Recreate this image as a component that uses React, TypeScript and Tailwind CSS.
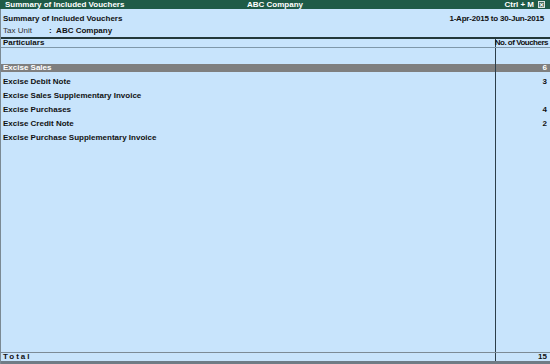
import React from "react";

const rows: { name: string; count?: string; active?: boolean }[] = [
  { name: "Excise Sales", count: "6", active: true },
  { name: "Excise Debit Note", count: "3" },
  { name: "Excise Sales Supplementary Invoice" },
  { name: "Excise Purchases", count: "4" },
  { name: "Excise Credit Note", count: "2" },
  { name: "Excise Purchase Supplementary Invoice" },
];

const App: React.FC = () => {
  return (
    <div
      className="w-[550px] h-[364px] flex flex-col bg-[#c8e4fc] text-[8px] leading-none text-[#111] overflow-hidden"
      style={{ fontFamily: '"Liberation Sans", Arial, sans-serif' }}
    >
      {/* Title bar */}
      <div className="h-[9px] flex items-center bg-[#1f5b47] text-white font-bold px-[5px] relative">
        <span>Summary of Included Vouchers</span>
        <span className="absolute left-[247px]">ABC Company</span>
        <span className="ml-auto mr-[4px]">Ctrl + M</span>
        <span className="w-[7px] h-[7px] border border-white/80 bg-[#486f62] flex items-center justify-center text-[6px]">
          ✕
        </span>
      </div>

      {/* Body */}
      <div className="flex-1 flex flex-col border-l border-[#7b8a94]">
        {/* Report header */}
        <div className="h-[28px] flex flex-col px-[2px] pt-[6px] gap-[4px]">
          <div className="flex font-bold">
            <span>Summary of Included Vouchers</span>
            <span className="ml-auto mr-[4px] tracking-[-0.2px]">1-Apr-2015 to 30-Jun-2015</span>
          </div>
          <div className="flex">
            <span className="w-[46px] text-[#333]">Tax Unit</span>
            <span className="font-bold">:&nbsp;&nbsp;ABC Company</span>
          </div>
        </div>

        {/* Column headers */}
        <div className="h-[11px] flex border-t-2 border-b border-t-[#23383a] border-b-[#7f98aa] font-bold">
          <div className="flex-1 flex items-center px-[2px]">Particulars</div>
          <div className="w-[55px] flex items-center justify-end pr-[2px] border-l border-[#2c3e4a] whitespace-nowrap tracking-[-0.5px]">
            No. of Vouchers
          </div>
        </div>

        {/* Rows */}
        <div className="flex-1 flex flex-col font-bold">
          <div className="h-[13px] flex">
            <div className="flex-1" />
            <div className="w-[55px] border-l border-[#2c3e4a]" />
          </div>
          {rows.map((r) => (
            <div key={r.name} className="h-[14px] flex">
              <div className="flex-1 flex items-center">
                <div
                  className={
                    r.active
                      ? "h-[8px] w-full flex items-center px-[2px] bg-[#7f7f7f] text-white"
                      : "h-[8px] w-full flex items-center px-[2px]"
                  }
                >
                  {r.name}
                </div>
              </div>
              <div className="w-[55px] flex items-center border-l border-[#2c3e4a]">
                <div
                  className={
                    r.active
                      ? "h-[8px] w-full flex items-center justify-end pr-[3px] bg-[#7f7f7f] text-white"
                      : "h-[8px] w-full flex items-center justify-end pr-[3px]"
                  }
                >
                  {r.count}
                </div>
              </div>
            </div>
          ))}
          <div className="flex-1 flex">
            <div className="flex-1" />
            <div className="w-[55px] border-l border-[#2c3e4a]" />
          </div>
        </div>

        {/* Total */}
        <div className="h-[12px] flex border-t border-b-[3px] border-t-[#7c8b96] border-b-[#6f7c86] font-bold">
          <div className="flex-1 flex items-center px-[2px] tracking-[2px]">Total</div>
          <div className="w-[55px] flex items-center justify-end pr-[3px] border-l border-[#2c3e4a]">
            15
          </div>
        </div>
      </div>
    </div>
  );
};

export default App;
